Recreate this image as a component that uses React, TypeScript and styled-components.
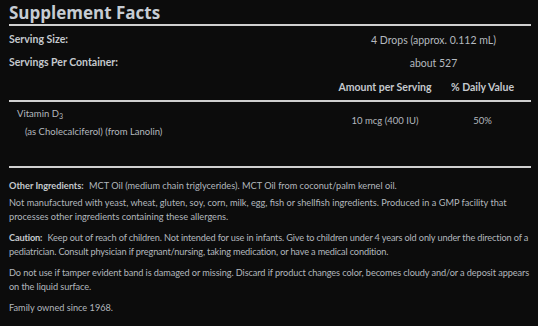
import styled, { createGlobalStyle } from 'styled-components';

const GlobalStyle = createGlobalStyle`
  body {
    margin: 0;
    background: #0c0c0c;
    font-family: Lato, "Liberation Sans", sans-serif;
  }
`;

const Wrap = styled.div`
  width: 538px;
  height: 326px;
  box-sizing: border-box;
  padding: 0 7px 0 9px;
  background: #0c0c0c;
  color: #b9bec4;
  overflow: hidden;
`;

const Title = styled.h1`
  margin: 0;
  padding-top: 2px;
  font-family: "Open Sans", sans-serif;
  font-size: 17px;
  font-weight: 700;
  line-height: 22px;
  color: #c6ccd3;
  border-bottom: 2px solid #d0d0d0;
`;

const Grid = styled.div`
  display: grid;
  grid-template-columns: 1fr 98px 97px;
  align-items: center;
`;

const Label = styled.div`
  font-size: 10.5px;
  font-weight: 700;
  color: #c5c9ce;
  height: 23px;
  line-height: 23px;
`;

const Value = styled.div<{ $span?: boolean; $bold?: boolean }>`
  grid-column: ${(p) => (p.$span ? '2 / 4' : 'auto')};
  text-align: center;
  font-size: 10.5px;
  font-weight: ${(p) => (p.$bold ? 700 : 400)};
  color: ${(p) => (p.$bold ? '#c5c9ce' : '#b4b9bf')};
`;

const Head = styled(Grid)`
  padding-top: 2px;
`;

const HeadRow = styled(Grid)`
  height: 26px;
  border-bottom: 2px solid #d0d0d0;
`;

const Nutrient = styled(Grid)`
  height: 64px;
  align-items: start;
  border-bottom: 2px solid #d0d0d0;
`;

const Name = styled.div`
  padding: 4px 0 0 8px;
  font-size: 9.5px;
  line-height: 16px;
  color: #b4b9bf;

  sub {
    font-size: 7px;
    vertical-align: -2px;
  }
`;

const Source = styled.div`
  padding-left: 8px;
`;

const Amount = styled.div`
  padding-top: 13px;
  text-align: center;
  font-size: 9.5px;
  color: #b4b9bf;
`;

const Notes = styled.div`
  padding-top: 11px;
  display: flex;
  flex-direction: column;
`;

const Note = styled.p<{ $gap?: number; $track?: number }>`
  margin: 0 0 ${(p) => p.$gap ?? 7}px;
  font-size: 9.2px;
  line-height: 14px;
  letter-spacing: ${(p) => p.$track ?? 0}px;
  color: #b2b7bd;

  b {
    font-weight: 700;
    color: #c5c9ce;
    margin-right: 3px;
  }
`;

export default function App() {
  return (
    <Wrap>
      <GlobalStyle />
      <Title>Supplement Facts</Title>
      <Head>
        <Label>Serving Size:</Label>
        <Value $span>4 Drops (approx. 0.112 mL)</Value>
        <Label>Servings Per Container:</Label>
        <Value $span>about 527</Value>
      </Head>
      <HeadRow>
        <div />
        <Value $bold>Amount per Serving</Value>
        <Value $bold>% Daily Value</Value>
      </HeadRow>
      <Nutrient>
        <Name>
          Vitamin D<sub>3</sub>
          <Source>(as Cholecalciferol) (from Lanolin)</Source>
        </Name>
        <Amount>10 mcg (400 IU)</Amount>
        <Amount>50%</Amount>
      </Nutrient>
      <Notes>
        <Note $gap={3}>
          <b>Other Ingredients:</b> MCT Oil (medium chain triglycerides). MCT Oil from coconut/palm kernel oil.
        </Note>
        <Note>
          Not manufactured with yeast, wheat, gluten, soy, corn, milk, egg, fish or shellfish ingredients. Produced in a GMP facility that processes other ingredients containing these allergens.
        </Note>
        <Note $track={-0.15}>
          <b>Caution:</b> Keep out of reach of children. Not intended for use in infants. Give to children under 4 years old only under the direction of a pediatrician. Consult physician if pregnant/nursing, taking medication, or have a medical condition.
        </Note>
        <Note $track={-0.1}>
          Do not use if tamper evident band is damaged or missing. Discard if product changes color, becomes cloudy and/or a deposit appears on the liquid surface.
        </Note>
        <Note>Family owned since 1968.</Note>
      </Notes>
    </Wrap>
  );
}
